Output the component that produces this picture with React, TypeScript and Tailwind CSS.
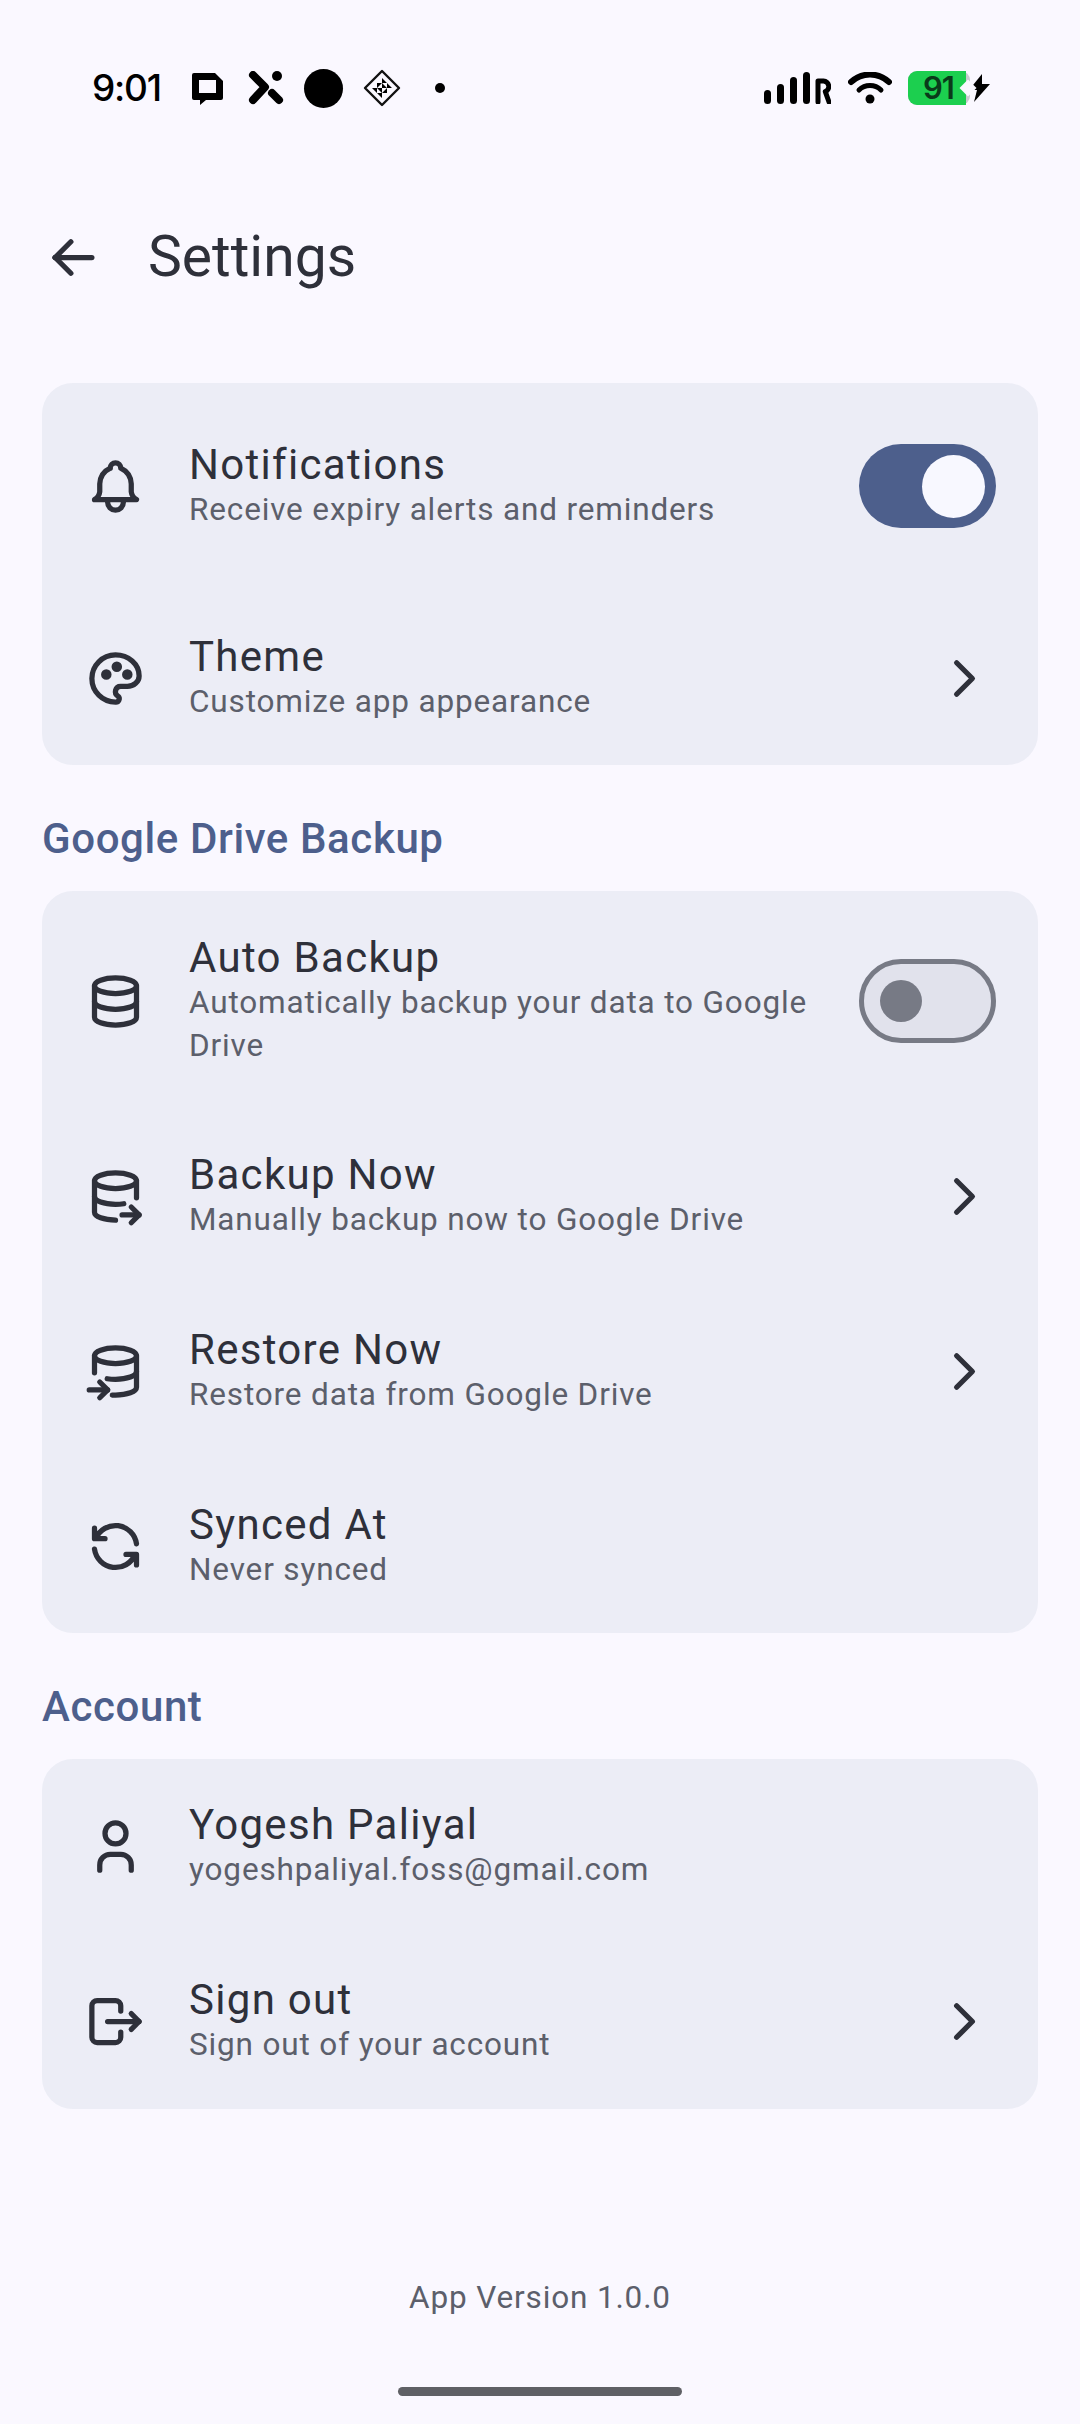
import { ReactNode } from "react";
import {
  TbArrowLeft,
  TbBell,
  TbChevronRight,
  TbDatabase,
  TbLogout,
  TbPalette,
  TbRefresh,
  TbUser,
} from "react-icons/tb";

function BackupIcon() {
  return (
    <svg width="63" height="63" viewBox="0 0 24 24" fill="none" stroke="currentColor" strokeWidth="2" strokeLinecap="round" strokeLinejoin="round">
      <ellipse cx="12" cy="6" rx="8" ry="3" />
      <path d="M4 6v6c0 1.657 3.582 3 8 3c1.118 0 2.183-.086 3.15-.241" />
      <path d="M20 12.5V6" />
      <path d="M4 12v6c0 1.657 3.582 3 8 3" />
      <path d="M14.5 19h6.5" />
      <path d="M18 16l3 3l-3 3" />
    </svg>
  );
}

function RestoreIcon() {
  return (
    <svg width="63" height="63" viewBox="0 0 24 24" fill="none" stroke="currentColor" strokeWidth="2" strokeLinecap="round" strokeLinejoin="round">
      <ellipse cx="12" cy="6" rx="8" ry="3" />
      <path d="M20 6v6c0 1.657-3.582 3-8 3c-1.118 0-2.183-.086-3.15-.241" />
      <path d="M4 12.5V6" />
      <path d="M20 12v6c0 1.657-3.582 3-8 3c-.4 0-.8 0-1.2-.03" />
      <path d="M2 19h7" />
      <path d="M6 16l3 3l-3 3" />
    </svg>
  );
}

function StatusBar() {
  return (
    <div className="h-[176px] flex items-center pl-[92px] pr-[90px] text-black">
      <span className="w-[72px] text-[37px] font-medium font-['Inter',sans-serif] tracking-[-1.2px]">9:01</span>
      {/* notification icons */}
      <svg className="ml-[27px]" width="33" height="33" viewBox="0 0 33 33">
        <path d="M3 1h21l8 8v17a2 2 0 0 1-2 2H15l-6 5v-5H3a2 2 0 0 1-2-2V3a2 2 0 0 1 2-2z" fill="#000" />
        <rect x="8" y="8" width="17" height="13" fill="#faf8ff" />
      </svg>
      <svg className="ml-[24px]" width="36" height="34" viewBox="0 0 36 34">
        <path d="M5 4 L17 16 L5 29" stroke="#000" strokeWidth="8" strokeLinecap="round" strokeLinejoin="round" fill="none" />
        <path d="M24 22 L31 29" stroke="#000" strokeWidth="8" strokeLinecap="round" fill="none" />
        <circle cx="29" cy="5" r="5" fill="#000" />
      </svg>
      <div className="ml-[20px] w-[39px] h-[39px] rounded-full bg-black" />
      <svg className="ml-[20px]" width="38" height="38" viewBox="0 0 38 38">
        <path d="M19 2 L36 19 L19 36 L2 19 Z" stroke="#111" strokeWidth="2.4" strokeLinejoin="round" fill="none" />
        <path d="M19 9 L24 14 L19 14 Z M24 14 L24 19 L29 19 Z M9 19 L14 19 L14 24 Z M14 14 L19 14 L14 19 Z M24 24 L19 24 L24 19 Z M19 24 L19 29 L14 24 Z M19 19 L24 19 L19 14 Z M19 19 L14 19 L19 24 Z" fill="#000" />
      </svg>
      <div className="ml-[34px] w-[10px] h-[10px] rounded-full bg-black" />

      <div className="ml-auto flex items-center">
        <svg width="67" height="32" viewBox="0 0 67 32">
          <rect x="0" y="18" width="7" height="14" rx="3.5" />
          <rect x="13" y="12" width="7" height="20" rx="3.5" />
          <rect x="26" y="5" width="7" height="27" rx="3.5" />
          <rect x="39" y="0" width="7" height="32" rx="3.5" />
          <path d="M54 30V9h5.5a5.5 5.5 0 0 1 1.8 10.6L65 30" stroke="#000" strokeWidth="5" fill="none" strokeLinecap="round" strokeLinejoin="round" />
        </svg>
        <svg className="ml-[17px]" width="44" height="32" viewBox="0 0 44 32">
          <path d="M3 10 C14 0 30 0 41 10" stroke="#000" strokeWidth="6" fill="none" strokeLinecap="round" />
          <path d="M11 18 C17 12 27 12 33 18" stroke="#000" strokeWidth="5" fill="none" strokeLinecap="round" />
          <circle cx="22" cy="27" r="4.5" fill="#000" />
        </svg>
        <div className="ml-[16px] relative w-[62px] h-[34px] rounded-[9px] bg-[#c9c9cf]">
          <div className="h-full w-[58px] rounded-l-[9px] bg-[#1ccf4f]" />
          <div className="absolute right-[-4px] top-[11px] w-[12px] h-[12px] rotate-45 bg-[#faf8ff]" />
          <span className="absolute left-[15px] top-0 leading-[34px] text-[31px] font-semibold text-[#0a3a1a] font-['Inter',sans-serif] tracking-[-1px]">
            91
          </span>
        </div>
        <svg className="ml-[-1px]" width="21" height="28" viewBox="0 0 21 28">
          <path d="M13 0 L0 16 H8 L5 28 L21 10 H13 Z" fill="#000" />
        </svg>
      </div>
    </div>
  );
}

function Row({
  icon,
  title,
  sub,
  right,
  pad = "pt-[43px] pb-[43px]",
}: {
  icon: ReactNode;
  title: string;
  sub: string;
  right?: ReactNode;
  pad?: string;
}) {
  return (
    <div className={`flex items-center pl-[42px] pr-[42px] ${pad}`}>
      <div className="w-[63px] h-[63px] shrink-0 text-[#2e303a] flex items-center justify-center">{icon}</div>
      <div className="ml-[42px] flex-1 min-w-0 pr-[42px]">
        <div className="text-[42px] leading-[46px] tracking-[1.3px] text-[#2e303a]">{title}</div>
        <div className="text-[31.5px] leading-[43px] tracking-[0.85px] text-[#5c5f6b]">{sub}</div>
      </div>
      {right}
    </div>
  );
}

function Chevron() {
  return <TbChevronRight size={63} className="text-[#2e303a] shrink-0" />;
}

function SwitchOn() {
  return (
    <div className="w-[137px] h-[84px] shrink-0 rounded-full bg-[#4d5f8c] flex items-center justify-end pr-[11px]">
      <div className="w-[63px] h-[63px] rounded-full bg-[#f8f8ff]" />
    </div>
  );
}

function SwitchOff() {
  return (
    <div className="w-[137px] h-[84px] shrink-0 rounded-full bg-[#e1e2ec] border-[5px] border-[#777a85] flex items-center pl-[16px]">
      <div className="w-[42px] h-[42px] rounded-full bg-[#777a85]" />
    </div>
  );
}

function Card({ children }: { children: ReactNode }) {
  return <div className="mx-[42px] rounded-[31px] bg-[#ecedf6]">{children}</div>;
}

function SectionTitle({ children }: { children: ReactNode }) {
  return (
    <div className="mx-[42px] h-[126px] pt-[20px] flex items-center text-[42px] font-medium tracking-[0.6px] text-[#4d5f8c]">
      {children}
    </div>
  );
}

export default function App() {
  return (
    <div className="w-[1080px] h-[2424px] bg-[#faf8ff] flex flex-col font-['Roboto',sans-serif] overflow-hidden">
      <StatusBar />

      {/* Top app bar */}
      <div className="h-[162px] flex items-center pl-[42px]">
        <TbArrowLeft size={63} className="text-[#2e303a]" />
        <span className="ml-[43px] text-[57px] text-[#2e303a]">Settings</span>
      </div>

      <div className="h-[45px]" />

      <Card>
        <Row icon={<TbBell size={63} />} title="Notifications" sub="Receive expiry alerts and reminders" right={<SwitchOn />} pad="pt-[58.5px] pb-[58.5px]" />
        <Row icon={<TbPalette size={63} />} title="Theme" sub="Customize app appearance" right={<Chevron />} pad="pt-[45px] pb-[42px]" />
      </Card>

      <SectionTitle>Google Drive Backup</SectionTitle>

      <Card>
        <Row icon={<TbDatabase size={63} />} title="Auto Backup" sub="Automatically backup your data to Google Drive" right={<SwitchOff />} pad="pt-[44px] pb-[42px]" />
        <Row icon={<BackupIcon />} title="Backup Now" sub="Manually backup now to Google Drive" right={<Chevron />} />
        <Row icon={<RestoreIcon />} title="Restore Now" sub="Restore data from Google Drive" right={<Chevron />} />
        <Row icon={<TbRefresh size={63} />} title="Synced At" sub="Never synced" pad="pt-[43px] pb-[42px]" />
      </Card>

      <SectionTitle>Account</SectionTitle>

      <Card>
        <Row icon={<TbUser size={63} />} title="Yogesh Paliyal" sub="yogeshpaliyal.foss@gmail.com" />
        <Row icon={<TbLogout size={63} />} title="Sign out" sub="Sign out of your account" right={<Chevron />} />
      </Card>

      <div className="flex-1" />

      <div className="text-center text-[31.5px] leading-[42px] tracking-[0.85px] text-[#5c5f6b] mb-[-2px]">App Version 1.0.0</div>

      {/* Gesture bar */}
      <div className="h-[107px] flex items-end justify-center pb-[28px]">
        <div className="w-[284px] h-[9px] rounded-full bg-[#5f6065]" />
      </div>
    </div>
  );
}
